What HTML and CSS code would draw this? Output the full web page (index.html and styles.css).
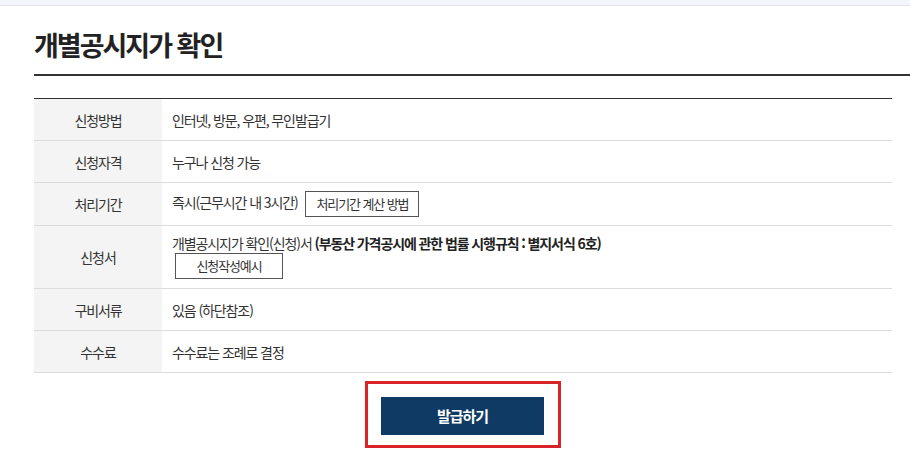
FILE: index.html
```html
<!DOCTYPE html>
<html lang="ko">
<head>
    <meta charset="UTF-8">
    <meta name="viewport" content="width=device-width, initial-scale=1.0">
    <title>개별공시지가 확인</title>
    <link rel="stylesheet" href="styles.css">
</head>
<body>
    <div class="top-band"></div>

    <div class="page">
        <h2 class="page-title">개별공시지가 확인</h2>

        <div class="content">
            <table class="info-table">
                <tr>
                    <th>신청방법</th>
                    <td>인터넷, 방문, 우편, 무인발급기</td>
                </tr>
                <tr>
                    <th>신청자격</th>
                    <td>누구나 신청 가능</td>
                </tr>
                <tr>
                    <th>처리기간</th>
                    <td>즉시(근무시간 내 3시간) <a href="#" class="line-btn">처리기간 계산 방법</a></td>
                </tr>
                <tr>
                    <th>신청서</th>
                    <td class="multi">
                        <div>개별공시지가 확인(신청)서 <strong>(부동산 가격공시에 관한 법률 시행규칙 : 별지서식 6호)</strong></div>
                        <a href="#" class="line-btn first">신청작성예시</a>
                    </td>
                </tr>
                <tr>
                    <th>구비서류</th>
                    <td>있음 (하단참조)</td>
                </tr>
                <tr>
                    <th>수수료</th>
                    <td>수수료는 조례로 결정</td>
                </tr>
            </table>

            <div class="btn-area">
                <div class="highlight">
                    <a href="#" class="issue-btn">발급하기</a>
                </div>
            </div>
        </div>
    </div>
</body>
</html>
```

FILE: styles.css
```css
:root {
    --text-color: #333;
    --line-dark: #333;
    --line-light: #dcdcdc;
    --label-bg: #f4f4f4;
    --navy: #0f3a63;
    --mark-red: #d8232a;
}
body {
    font-family: "Noto Sans CJK KR", "Noto Sans", sans-serif;
    margin: 0;
    padding: 0;
    background-color: #fff;
    color: var(--text-color);
    overflow: hidden;
}
.top-band {
    height: 5px;
    background-color: #f4f5fa;
    border-bottom: 1px solid #e4e4e8;
}
.page {
    padding-left: 34px;
}
.page-title {
    margin: 0;
    padding: 21px 0 11px;
    font-size: 27px;
    line-height: 36px;
    font-weight: 700;
    letter-spacing: -2px;
    color: #222;
    border-bottom: 2px solid var(--line-dark);
}
.content {
    width: 858px;
    padding-top: 22px;
}
.info-table {
    width: 100%;
    border-collapse: collapse;
    border-top: 1px solid var(--line-dark);
    border-bottom: 1px solid var(--line-dark);
    font-size: 14px;
    letter-spacing: -1.1px;
}
.info-table tr {
    border-bottom: 1px solid var(--line-light);
}
.info-table th {
    width: 128px;
    background-color: var(--label-bg);
    font-weight: 400;
    text-align: center;
    vertical-align: middle;
    padding: 0;
}
.info-table td {
    height: 25px;
    padding: 8px 10px;
    line-height: 20px;
    vertical-align: middle;
}
.info-table td.multi {
    padding-top: 7px;
    padding-bottom: 9px;
}
.info-table strong {
    color: #222;
}
.line-btn {
    display: inline-block;
    box-sizing: border-box;
    min-width: 108px;
    height: 26px;
    line-height: 24px;
    padding: 0 10px;
    margin-left: 5px;
    border: 1px solid #555;
    font-size: 13px;
    color: var(--text-color);
    text-align: center;
    text-decoration: none;
    vertical-align: middle;
}
.line-btn.first {
    margin-left: 3px;
}
.btn-area {
    display: flex;
    justify-content: center;
    padding-top: 8px;
}
.highlight {
    border: 3px solid var(--mark-red);
    padding: 13px 14px 10px 13px;
}
.issue-btn {
    display: block;
    width: 163px;
    height: 38px;
    line-height: 38px;
    background-color: var(--navy);
    color: #fff;
    font-size: 15px;
    font-weight: 700;
    letter-spacing: -1px;
    text-align: center;
    text-decoration: none;
}
```
